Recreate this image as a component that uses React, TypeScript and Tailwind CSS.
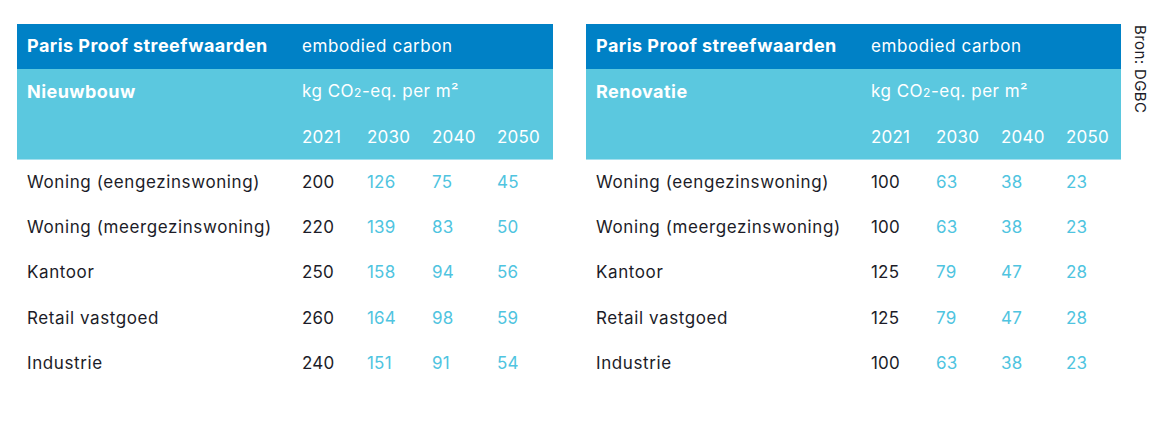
const YEARS = ['2021', '2030', '2040', '2050']

type Row = { label: string; values: number[] }

const NIEUWBOUW: Row[] = [
  { label: 'Woning (eengezinswoning)', values: [200, 126, 75, 45] },
  { label: 'Woning (meergezinswoning)', values: [220, 139, 83, 50] },
  { label: 'Kantoor', values: [250, 158, 94, 56] },
  { label: 'Retail vastgoed', values: [260, 164, 98, 59] },
  { label: 'Industrie', values: [240, 151, 91, 54] },
]

const RENOVATIE: Row[] = [
  { label: 'Woning (eengezinswoning)', values: [100, 63, 38, 23] },
  { label: 'Woning (meergezinswoning)', values: [100, 63, 38, 23] },
  { label: 'Kantoor', values: [125, 79, 47, 28] },
  { label: 'Retail vastgoed', values: [125, 79, 47, 28] },
  { label: 'Industrie', values: [100, 63, 38, 23] },
]

const cols = 'grid grid-cols-[285px_65px_65px_65px_1fr] items-center'

function CarbonTable({ title, rows, width }: { title: string; rows: Row[]; width: string }) {
  return (
    <div className={width}>
      <div className={`${cols} h-[45px] pb-[1px] bg-[#0081c6] text-white`}>
        <div className="pl-[10px] text-[18px] font-bold tracking-[0.45px]">Paris Proof streefwaarden</div>
        <div className="col-span-4 tracking-[0.6px]">embodied carbon</div>
      </div>
      <div className="bg-[#5bc8df] text-white border-b border-[#a6e0ee]">
        <div className={`${cols} h-[45px]`}>
          <div className="pl-[10px] text-[18px] font-bold tracking-[0.45px]">{title}</div>
          <div className="col-span-4 tracking-[0.5px]">
            kg CO<span className="text-[12px]">2</span>-eq. per m²
          </div>
        </div>
        <div className={`${cols} h-[45px] pt-[1px]`}>
          <div />
          {YEARS.map((y) => (
            <div key={y} className="tracking-[0.2px]">
              {y}
            </div>
          ))}
        </div>
      </div>
      {rows.map((row) => (
        <div key={row.label} className={`${cols} h-[45.2px]`}>
          <div className="pl-[10px] text-[#1c1c28] tracking-[0.6px]">{row.label}</div>
          <div className="text-[#1c1c28] tracking-[0.2px]">{row.values[0]}</div>
          {row.values.slice(1).map((v, i) => (
            <div key={i} className="text-[#4fc4e0] tracking-[0.2px]">
              {v}
            </div>
          ))}
        </div>
      ))}
    </div>
  )
}

export default function App() {
  return (
    <div
      className="w-[1162px] h-[421px] bg-white flex pt-[24px] pl-[17px] text-[17px] leading-none"
      style={{ fontFamily: 'Inter, sans-serif' }}
    >
      <CarbonTable title="Nieuwbouw" rows={NIEUWBOUW} width="w-[536px]" />
      <div className="w-[33px]" />
      <CarbonTable title="Renovatie" rows={RENOVATIE} width="w-[535px]" />
      <div className="ml-[12px] pt-[1px] [writing-mode:vertical-rl] text-[15px] tracking-[0.4px] text-[#1c1c28]">
        Bron: DGBC
      </div>
    </div>
  )
}
